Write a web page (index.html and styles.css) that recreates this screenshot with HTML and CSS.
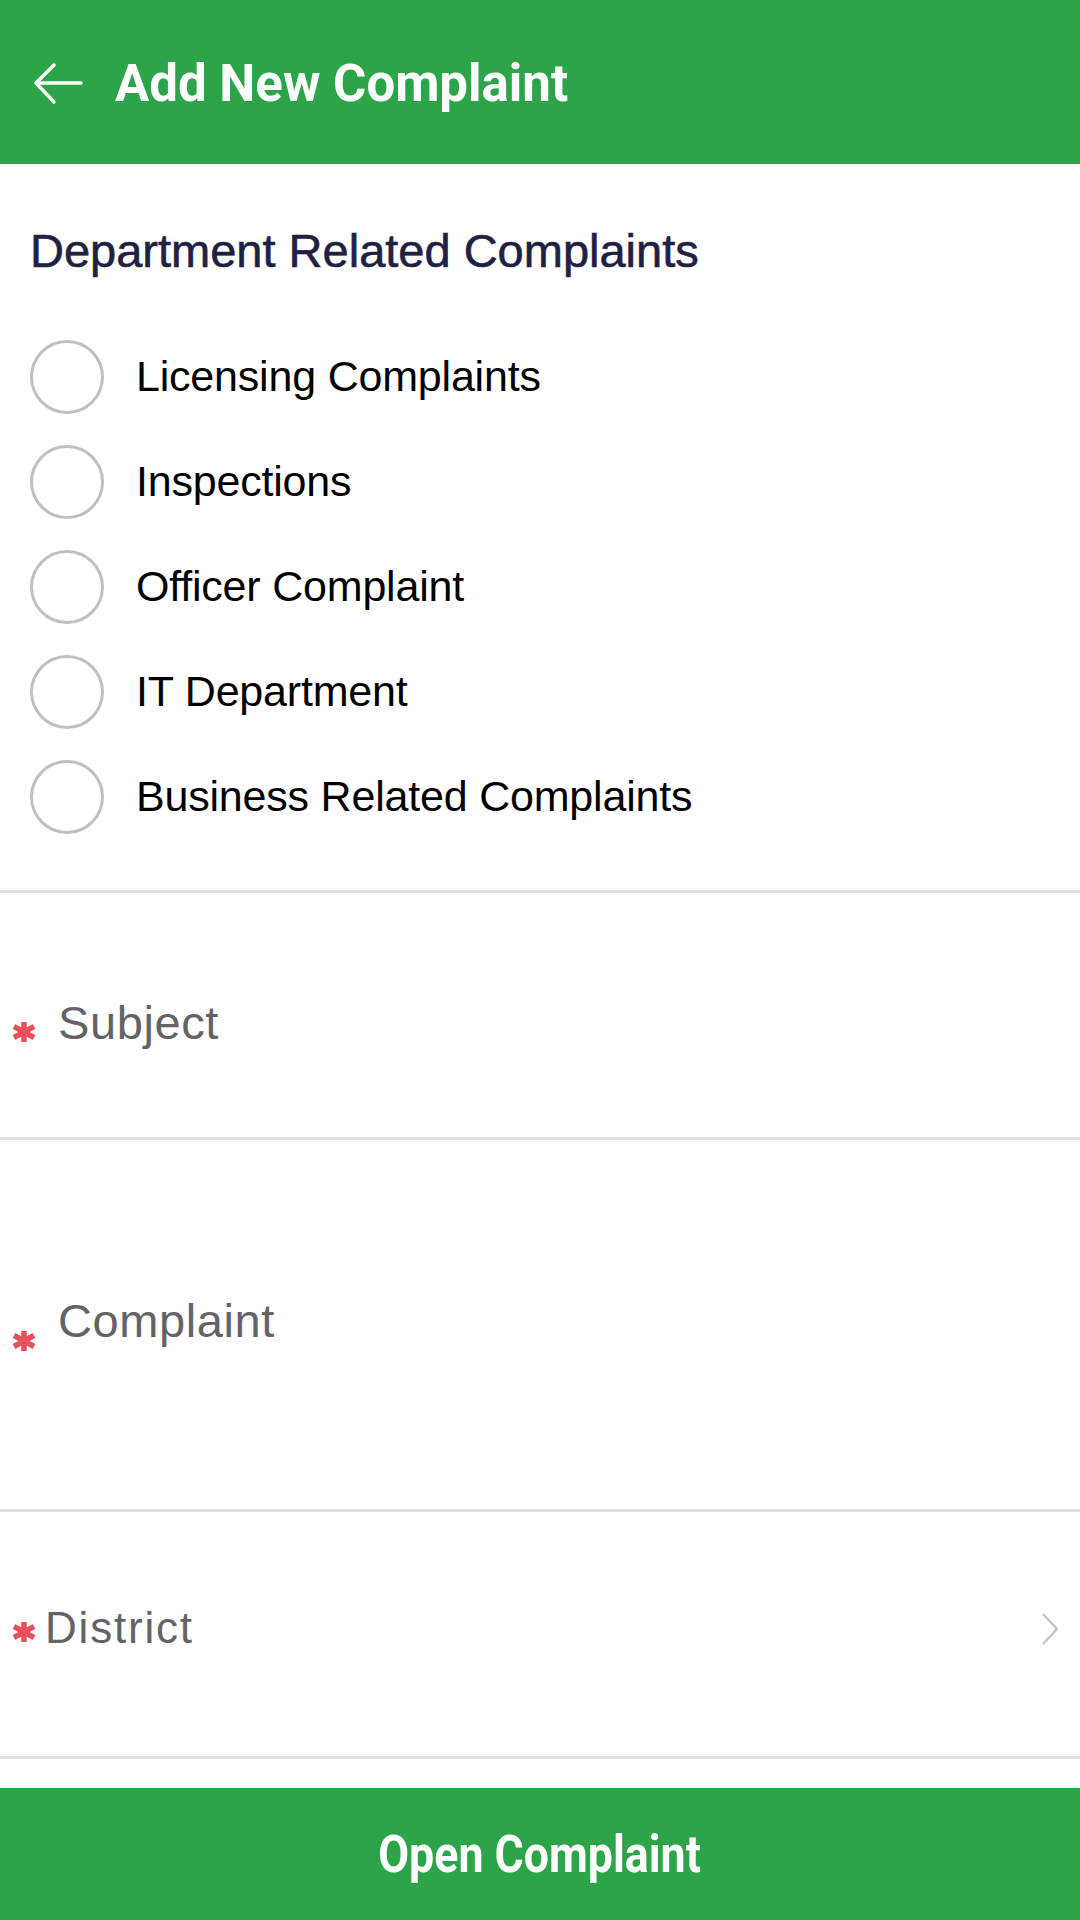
FILE: index.html
```html
<!DOCTYPE html>
<html lang="en">

<head>
 <meta charset="UTF-8">
 <meta name="viewport" content="width=device-width, initial-scale=1.0">
 <title>Add New Complaint</title>
<link rel="stylesheet" href="styles.css">
</head>

<body>

 <header class="topbar">
  <button class="back" type="button" aria-label="Back">
   <svg width="52" height="44" viewBox="0 0 52 44">
    <path d="M4 21 H49 M22 3 L4 21 L22 40" fill="none" stroke="#fff" stroke-width="3.5" stroke-linecap="round" stroke-linejoin="round"/>
   </svg>
  </button>
  <h1>Add New Complaint</h1>
 </header>

 <form id="complaintForm">
  <section class="departments">
   <h2>Department Related Complaints</h2>
   <div class="options">
    <label class="option"><input type="radio" name="dept" value="licensing"><span>Licensing Complaints</span></label>
    <label class="option"><input type="radio" name="dept" value="inspections"><span>Inspections</span></label>
    <label class="option"><input type="radio" name="dept" value="officer"><span>Officer Complaint</span></label>
    <label class="option"><input type="radio" name="dept" value="it"><span>IT Department</span></label>
    <label class="option"><input type="radio" name="dept" value="business"><span>Business Related Complaints</span></label>
   </div>
  </section>

  <div class="field subject">
   <svg class="req" width="26" height="22" viewBox="0 0 26 22">
    <path d="M13 1 V21 M3 5.5 L23 16.5 M23 5.5 L3 16.5" stroke="#ea5059" stroke-width="5.5"/>
   </svg>
   <span class="placeholder">Subject</span>
  </div>

  <div class="field complaint">
   <svg class="req" width="26" height="22" viewBox="0 0 26 22">
    <path d="M13 1 V21 M3 5.5 L23 16.5 M23 5.5 L3 16.5" stroke="#ea5059" stroke-width="5.5"/>
   </svg>
   <span class="placeholder">Complaint</span>
  </div>

  <div class="field district">
   <svg class="req" width="26" height="22" viewBox="0 0 26 22">
    <path d="M13 1 V21 M3 5.5 L23 16.5 M23 5.5 L3 16.5" stroke="#ea5059" stroke-width="5.5"/>
   </svg>
   <span class="placeholder">District</span>
   <svg class="chevron" width="22" height="36" viewBox="0 0 22 36">
    <path d="M4 3 L18 18 L4 33" fill="none" stroke="#c6c6ca" stroke-width="2.5"/>
   </svg>
  </div>

  <div class="spacer"></div>

  <button class="submit" type="button"><span>Open Complaint</span></button>
 </form>

</body>

</html>
```

FILE: styles.css
```css
 body {
  margin: 0;
  height: 1920px;
  overflow: hidden;
  background-color: #fff;
  font-family: "Liberation Sans", Arial, sans-serif;
 }

 .topbar {
  height: 164px;
  box-sizing: border-box;
  padding: 3px 0 0 32px;
  display: flex;
  align-items: center;
  gap: 31px;
  background-color: #2ba547;
 }

 .back {
  background: none;
  border: none;
  padding: 0;
  display: flex;
 }

 .topbar h1 {
  margin: 0;
  font-family: Roboto, sans-serif;
  font-weight: 700;
  font-size: 51px;
  line-height: 1.2;
  color: #fff;
 }

 form {
  display: flex;
  flex-direction: column;
 }

 .departments {
  height: 729px;
  box-sizing: border-box;
  padding: 60px 0 0 30px;
  border-bottom: 3px solid #e1e1e4;
 }

 .departments h2 {
  margin: 0;
  font-size: 47px;
  font-weight: normal;
  line-height: 1.15;
  letter-spacing: 0;
  color: #1f2142;
  -webkit-text-stroke: 0.6px #1f2142;
 }

 .options {
  margin-top: 46px;
  display: flex;
  flex-direction: column;
 }

 .option {
  height: 105px;
  display: flex;
  align-items: center;
  gap: 32px;
  font-size: 43px;
  line-height: 1.15;
  letter-spacing: -0.2px;
  color: #000;
 }

 .option input {
  appearance: none;
  -webkit-appearance: none;
  margin: 0;
  width: 74px;
  height: 74px;
  border: 3px solid #c0c0c0;
  border-radius: 50%;
  box-sizing: border-box;
 }

 .option input:checked {
  border: 20px solid #2ba547;
 }

 .field {
  box-sizing: border-box;
  display: flex;
  align-items: flex-start;
  padding-left: 11px;
  border-bottom: 3px solid #e1e1e4;
 }

 .placeholder {
  font-size: 47px;
  line-height: 1.15;
  letter-spacing: 0.6px;
  color: #636366;
 }

 .subject {
  height: 247px;
  padding-top: 103px;
  gap: 21px;
 }

 .subject .req {
  margin-top: 25px;
 }

 .complaint {
  height: 372px;
  padding-top: 154px;
  gap: 21px;
 }

 .complaint .req {
  margin-top: 36px;
 }

 .district {
  height: 247px;
  padding: 91px 19px 0 11px;
  gap: 8px;
 }

 .district .placeholder {
  font-size: 44px;
  letter-spacing: 1.8px;
 }

 .district .req {
  margin-top: 18px;
 }

 .chevron {
  margin-left: auto;
  margin-top: 8px;
 }

 .spacer {
  height: 29px;
 }

 .submit {
  height: 132px;
  border: none;
  padding: 0;
  background-color: #2ba547;
  display: flex;
  align-items: center;
  justify-content: center;
  font-family: Roboto, sans-serif;
  font-weight: 700;
  font-size: 52px;
  color: #fff;
 }

 .submit span {
  display: inline-block;
  transform: scaleX(0.86);
 }
```
